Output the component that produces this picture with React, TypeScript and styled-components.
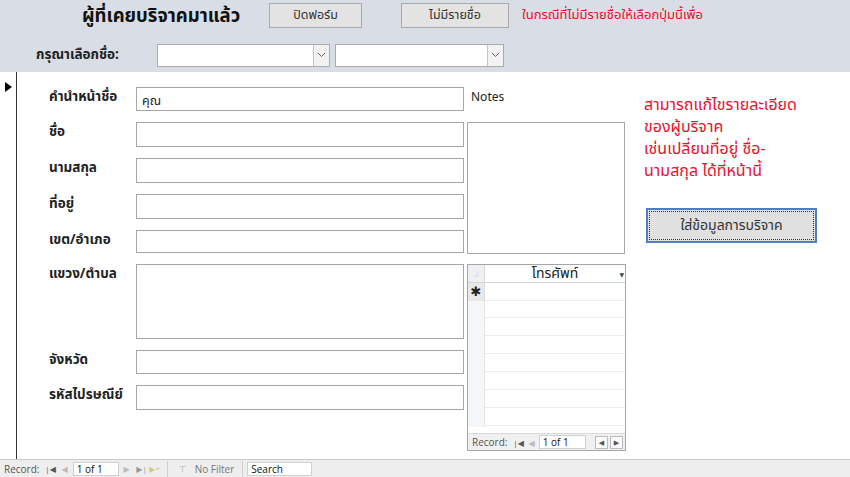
import React from "react";
import styled, { createGlobalStyle } from "styled-components";

const Global = createGlobalStyle`
  html, body { margin: 0; padding: 0; background: #fff; }
  body { font-family: Tahoma, "Noto Sans Thai", "Noto Sans", "DejaVu Sans", sans-serif; color: #222; }
  * { box-sizing: border-box; }
`;

const Page = styled.div`
  width: 850px;
  height: 477px;
  display: flex;
  flex-direction: column;
  overflow: hidden;
`;

const Header = styled.div`
  height: 72px;
  background: #d9dee6;
  display: flex;
  flex-direction: column;
`;

const HeaderRow = styled.div<{ $h: number; $pl: number }>`
  height: ${(p) => p.$h}px;
  padding-left: ${(p) => p.$pl}px;
  display: flex;
  align-items: center;
`;

const Title = styled.div`
  font-size: 18.5px;
  font-weight: bold;
  color: #111;
  width: 187px;
  margin-top: -6px;
`;

const FormButton = styled.div<{ $w: number; $ml: number }>`
  width: ${(p) => p.$w}px;
  margin-left: ${(p) => p.$ml}px;
  height: 25px;
  background: #e3e3e3;
  border: 1px solid #a9a9a9;
  font-size: 12.5px;
  color: #333;
  display: flex;
  align-items: center;
  justify-content: center;
  margin-top: -8px;
`;

const RedNote = styled.div`
  margin-left: 13px;
  margin-top: -8px;
  color: #e8102c;
  font-size: 13px;
`;

const ComboLabel = styled.div`
  font-size: 13.5px;
  font-weight: bold;
  width: 121px;
  color: #222;
`;

const Combo = styled.div<{ $w: number; $ml: number }>`
  width: ${(p) => p.$w}px;
  margin-left: ${(p) => p.$ml}px;
  height: 23px;
  background: #fff;
  border: 1px solid #ababab;
  display: flex;
  justify-content: flex-end;
`;

const ComboBtn = styled.div`
  width: 16px;
  height: 100%;
  border-left: 1px solid #c4c4c4;
  background: #f2f2f2;
  display: flex;
  align-items: center;
  justify-content: center;
`;

const Body = styled.div`
  flex: 1;
  display: flex;
  min-height: 0;
`;

const Selector = styled.div`
  width: 17px;
  border-right: 1px solid #333;
  padding: 3px 0 0 5px;
`;

const Detail = styled.div`
  flex: 1;
  display: flex;
  padding-top: 15px;
`;

const FieldCol = styled.div`
  width: 450px;
  padding-left: 32px;
  display: flex;
  flex-direction: column;
  gap: 11px;
`;

const FieldRow = styled.div<{ $h: number }>`
  height: ${(p) => p.$h}px;
  display: flex;
`;

const Label = styled.div`
  width: 87px;
  font-size: 13.5px;
  font-weight: bold;
  color: #222;
  white-space: nowrap;
`;

const Input = styled.div`
  width: 328px;
  height: 100%;
  border: 1px solid #a6a6a6;
  background: #fff;
  font-size: 12.5px;
  padding: 4px 0 0 5px;
`;

const MidCol = styled.div`
  width: 159px;
  display: flex;
  flex-direction: column;
`;

const NotesLabel = styled.div`
  font-size: 12px;
  padding-left: 4px;
  height: 35px;
  padding-top: 1px;
`;

const NotesBox = styled.div`
  height: 132px;
  border: 1px solid #a6a6a6;
  margin-right: 1px;
`;

const Sub = styled.div`
  margin-top: 10px;
  height: 187px;
  border: 1px solid #a6a6a6;
  display: flex;
  flex-direction: column;
  background: #fff;
`;

const SubGrid = styled.div`
  flex: 1;
  display: grid;
  grid-template-columns: 17px 1fr;
  grid-auto-rows: 18px;
  background-image: repeating-linear-gradient(to bottom, transparent 0 17px, #ececec 17px 18px);
  background-position: 0 17px;
`;

const SubHead = styled.div<{ $sel?: boolean }>`
  background: ${(p) => (p.$sel ? "#eef0f3" : "#fff")};
  border-bottom: 1px solid #d6d6d6;
  border-right: ${(p) => (p.$sel ? "1px solid #dcdcdc" : "none")};
  font-size: 14px;
  display: flex;
  align-items: center;
  justify-content: center;
  position: relative;
  color: #222;
`;

const HeadArrow = styled.span`
  position: absolute;
  right: 1px;
  top: 6px;
  font-size: 6px;
  color: #444;
`;

const SelCell = styled.div<{ $sel?: boolean }>`
  background: ${(p) => (p.$sel ? "#e8e8e8" : "#f4f6f9")};
  border-right: 1px solid #dcdcdc;
  font-size: 13px;
  display: flex;
  align-items: center;
  justify-content: center;
`;

const NewCell = styled.div`
  background: #fff;
  border-bottom: 1px solid #ececec;
`;

const SelFill = styled.div`
  grid-column: 1;
  grid-row: 3 / span 7;
  background: #f4f6f9;
  border-right: 1px solid #e4e4e4;
`;

const NavBar = styled.div<{ $main?: boolean }>`
  height: ${(p) => (p.$main ? 18 : 17)}px;
  background: ${(p) => (p.$main ? "#eeeeee" : "#f0f0f0")};
  border-top: 1px solid ${(p) => (p.$main ? "#c9c9c9" : "#d9d9d9")};
  display: flex;
  align-items: center;
  font-family: "Segoe UI", "Open Sans", "DejaVu Sans", sans-serif;
  font-size: 10px;
  color: #555;
  padding-left: 4px;
`;

const NavIcon = styled.span<{ $w: number; $c?: string }>`
  width: ${(p) => p.$w}px;
  text-align: center;
  font-size: 8px;
  color: ${(p) => p.$c || "#555"};
`;

const NavInput = styled.div<{ $w: number }>`
  width: ${(p) => p.$w}px;
  height: 14px;
  background: #fff;
  border: 1px solid #d0d0d0;
  font-size: 10px;
  color: #111;
  padding-left: 3px;
  line-height: 12px;
`;

const NavSep = styled.span<{ $ml: number; $mr: number }>`
  width: 1px;
  height: 16px;
  background: #d0d0d0;
  margin: 0 ${(p) => p.$mr}px 0 ${(p) => p.$ml}px;
`;

const FilterText = styled.span`
  color: #777;
  margin-left: 6px;
`;

const Spacer = styled.span`
  flex: 1;
`;

const SmallBtn = styled.div`
  width: 13px;
  height: 13px;
  border: 1px solid #bdbdbd;
  background: #fafafa;
  font-size: 7px;
  color: #555;
  display: flex;
  align-items: center;
  justify-content: center;
  margin-right: 2px;
`;

const RightCol = styled.div`
  padding-left: 18px;
  display: flex;
  flex-direction: column;
`;

const RedBlock = styled.div`
  color: #e8102c;
  margin-top: 7px;
  width: 200px;
  display: flex;
  flex-direction: column;
`;

const RedLine = styled.div`
  font-size: 16px;
  height: 22px;
  line-height: 22px;
  white-space: nowrap;
`;

const BigButton = styled.div`
  margin-top: 26px;
  margin-left: 2px;
  width: 171px;
  height: 35px;
  background: #e0e0e0;
  border: 2px solid #4f7fbf;
  outline: 1px dotted #333;
  outline-offset: -4px;
  font-size: 14px;
  color: #333;
  display: flex;
  align-items: center;
  justify-content: center;
`;

const Chevron = () => (
  <svg width="9" height="6" viewBox="0 0 9 6">
    <path d="M1 1 L4.5 4.5 L8 1" fill="none" stroke="#666" strokeWidth="1" />
  </svg>
);

const fields: [string, number, string?][] = [
  ["คำนำหน้าชื่อ", 24, "คุณ"],
  ["ชื่อ", 25],
  ["นามสกุล", 25],
  ["ที่อยู่", 25],
  ["เขต/อำเภอ", 23],
  ["แขวง/ตำบล", 75],
  ["จังหวัด", 24],
  ["รหัสไปรษณีย์", 25],
];

const redLines = [
  "สามารถแก้ไขรายละเอียด",
  "ของผู้บริจาค",
  "เช่นเปลี่ยนที่อยู่ ชื่อ-",
  "นามสกุล ได้ที่หน้านี้",
];

export default function App() {
  return (
    <Page>
      <Global />
      <Header>
        <HeaderRow $h={38} $pl={82}>
          <Title>ผู้ที่เคยบริจาคมาแล้ว</Title>
          <FormButton $w={93} $ml={0}>ปิดฟอร์ม</FormButton>
          <FormButton $w={108} $ml={39}>ไม่มีรายชื่อ</FormButton>
          <RedNote>ในกรณีที่ไม่มีรายชื่อให้เลือกปุ่มนี้เพื่อ</RedNote>
        </HeaderRow>
        <HeaderRow $h={34} $pl={36}>
          <ComboLabel>กรุณาเลือกชื่อ:</ComboLabel>
          <Combo $w={173} $ml={0}>
            <ComboBtn>
              <Chevron />
            </ComboBtn>
          </Combo>
          <Combo $w={169} $ml={5}>
            <ComboBtn>
              <Chevron />
            </ComboBtn>
          </Combo>
        </HeaderRow>
      </Header>
      <Body>
        <Selector>
          <svg width="7" height="10" viewBox="0 0 7 10">
            <path d="M0 0 L7 5 L0 10 Z" fill="#000" />
          </svg>
        </Selector>
        <Detail>
          <FieldCol>
            {fields.map(([label, h, value]) => (
              <FieldRow key={label} $h={h}>
                <Label>{label}</Label>
                <Input>{value}</Input>
              </FieldRow>
            ))}
          </FieldCol>
          <MidCol>
            <NotesLabel>Notes</NotesLabel>
            <NotesBox />
            <Sub>
              <SubGrid>
                <SubHead $sel>
                  <svg width="8" height="8" viewBox="0 0 8 8">
                    <path d="M7 1 L1 7 L7 7 Z" fill="#e2e5ea" />
                  </svg>
                </SubHead>
                <SubHead>
                  โทรศัพท์
                  <HeadArrow>▼</HeadArrow>
                </SubHead>
                <SelCell $sel>✱</SelCell>
                <NewCell />
                <SelFill />
              </SubGrid>
              <NavBar>
                Record:&nbsp;&nbsp;
                <NavIcon $w={12}>|◀</NavIcon>
                <NavIcon $w={14} $c="#bbb">◀</NavIcon>
                <NavInput $w={47}>1 of 1</NavInput>
                <Spacer />
                <SmallBtn>◀</SmallBtn>
                <SmallBtn>▶</SmallBtn>
              </NavBar>
            </Sub>
          </MidCol>
          <RightCol>
            <RedBlock>
              {redLines.map((l) => (
                <RedLine key={l}>{l}</RedLine>
              ))}
            </RedBlock>
            <BigButton>ใส่ข้อมูลการบริจาค</BigButton>
          </RightCol>
        </Detail>
      </Body>
      <NavBar $main>
        Record:&nbsp;&nbsp;
        <NavIcon $w={12}>|◀</NavIcon>
        <NavIcon $w={16} $c="#bbb">◀</NavIcon>
        <NavInput $w={46}>1 of 1</NavInput>
        <NavIcon $w={16} $c="#bbb">▶</NavIcon>
        <NavIcon $w={14} $c="#999">▶|</NavIcon>
        <NavIcon $w={12} $c="#d8c890">▶*</NavIcon>
        <NavSep $ml={6} $mr={9} />
        <NavIcon $w={12} $c="#aaa">⊤</NavIcon>
        <FilterText>No Filter</FilterText>
        <NavSep $ml={8} $mr={4} />
        <NavInput $w={65}>Search</NavInput>
      </NavBar>
    </Page>
  );
}
